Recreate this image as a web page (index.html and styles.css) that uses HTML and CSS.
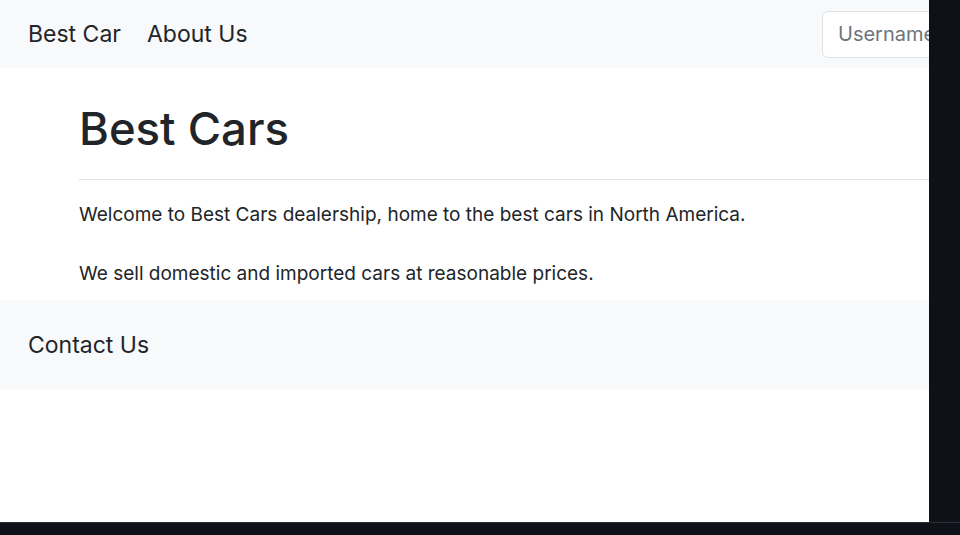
FILE: index.html
```html
<!DOCTYPE html>
<html lang="en">
<head>
<meta charset="utf-8">
<title>Best Cars</title>
<link rel="stylesheet" href="styles.css">
</head>
<body>
<div class="frame">
  <div class="top">
    <div class="page">
      <nav class="navbar">
        <div class="nav-links">
          <a class="nav-link" href="#">Best Car</a>
          <a class="nav-link" href="#">About Us</a>
        </div>
        <form class="login">
          <input class="field" type="text" placeholder="Username">
          <input class="field" type="password" placeholder="Password">
        </form>
      </nav>
      <main class="content">
        <h1 class="title">Best Cars</h1>
        <hr class="rule">
        <p class="lead first">Welcome to Best Cars dealership, home to the best cars in North America.</p>
        <p class="lead">We sell domestic and imported cars at reasonable prices.</p>
      </main>
      <footer class="contact">
        <a class="nav-link" href="#">Contact Us</a>
      </footer>
    </div>
    <div class="side"></div>
  </div>
  <div class="bottom"></div>
</div>
</body>
</html>
```
FILE: styles.css
```css
html, body {
  margin: 0;
  padding: 0;
  background: #0e1118;
}

.frame {
  width: 960px;
  height: 535px;
  display: flex;
  flex-direction: column;
  overflow: hidden;
}

.top {
  display: flex;
  height: 522px;
}

.page {
  width: 929px;
  height: 522px;
  background: #ffffff;
  overflow: hidden;
  font-family: Inter, "Noto Sans", sans-serif;
  color: #212529;
}

.side {
  flex: 1;
  background: #0e1118;
}

.bottom {
  height: 13px;
  box-sizing: border-box;
  border-top: 1px solid #2b2f37;
  background: #0e1118;
}

.navbar {
  display: flex;
  align-items: center;
  height: 68px;
  background: #f8f9fa;
}

.nav-links {
  flex: 1 0 auto;
  display: flex;
  gap: 26px;
  padding-left: 28px;
  white-space: nowrap;
}

.nav-link {
  font-size: 23px;
  line-height: 34px;
  color: #212529;
  text-decoration: none;
  white-space: nowrap;
}

.login {
  flex: 0 0 107px;
  min-width: 0;
  display: flex;
  gap: 8px;
  margin: 0;
}

.field {
  flex: 0 0 190px;
  height: 47px;
  box-sizing: border-box;
  border: 1px solid #dee2e6;
  border-radius: 6px;
  padding: 0 15px;
  font-family: Inter, "Noto Sans", sans-serif;
  font-size: 20px;
  color: #212529;
  background: #ffffff;
}

.field::placeholder {
  color: #6c757d;
}

.content {
  padding: 34px 0 0 79px;
}

.title {
  margin: 0;
  font-size: 45.5px;
  line-height: 53px;
  font-weight: 500;
}

.rule {
  margin: 24px 0 0;
  border: 0;
  border-top: 1px solid #e3e3e3;
}

.lead {
  margin: 0;
  font-size: 19px;
  line-height: 28px;
}

.lead.first {
  margin: 21px 0 31px;
}

.contact {
  margin-top: 12px;
  height: 89px;
  box-sizing: border-box;
  padding-left: 28px;
  display: flex;
  align-items: center;
  background: #f8f9fa;
}
```
